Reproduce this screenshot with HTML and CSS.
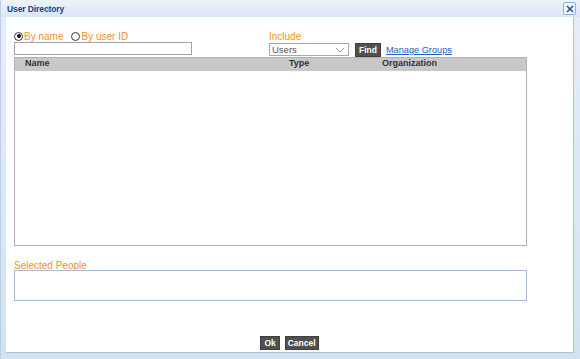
FILE: index.html
```html
<!DOCTYPE html>
<html lang="en">
<head>
    <meta charset="UTF-8">
    <meta name="viewport" content="width=device-width, initial-scale=1.0">
    <title>User Directory</title>
    <link rel="stylesheet" href="styles.css">
</head>
<body>
    <div class="dialog">
        <div class="titlebar">
            <span class="title">User Directory</span>
            <span class="close-btn">
                <svg width="8" height="8" viewBox="0 0 8 8"><path d="M1 1L7 7M7 1L1 7" stroke="#2a4c96" stroke-width="1.6"/></svg>
            </span>
        </div>

        <div class="content">
            <div class="search">
                <div class="search-left">
                    <div class="options">
                        <label class="option"><span class="radio checked"></span>By name</label>
                        <label class="option"><span class="radio"></span>By user ID</label>
                    </div>
                    <input type="text" class="search-input">
                </div>
                <div class="search-right">
                    <div class="label">Include</div>
                    <div class="controls">
                        <div class="select">
                            <span>Users</span>
                            <svg width="10" height="6" viewBox="0 0 10 6"><path d="M1 1L5 5L9 1" fill="none" stroke="#9a9a9a" stroke-width="1"/></svg>
                        </div>
                        <button class="dark-btn find-btn">Find</button>
                        <a href="#" class="link">Manage Groups</a>
                    </div>
                </div>
            </div>

            <table class="results">
                <thead>
                    <tr>
                        <th class="col-name">Name</th>
                        <th class="col-type">Type</th>
                        <th>Organization</th>
                    </tr>
                </thead>
                <tbody>
                    <!-- search results go here -->
                    <tr><td colspan="3"></td></tr>
                </tbody>
            </table>

            <div class="label selected-label">Selected People</div>
            <div class="selected-box"></div>

            <div class="footer">
                <button class="dark-btn ok-btn">Ok</button>
                <button class="dark-btn cancel-btn">Cancel</button>
            </div>
        </div>
    </div>
</body>
</html>
```

FILE: styles.css
```css
body {
    margin: 0;
    font-family: "Liberation Sans", Arial, sans-serif;
    font-size: 10px;
    background-color: #d8e5f4;
}
.dialog {
    height: 359px;
    box-sizing: border-box;
    display: flex;
    flex-direction: column;
    background: linear-gradient(#e6eef8, #d3e2f2);
    border-left: 1px solid #b9cfe6;
}
.titlebar {
    height: 17px;
    display: flex;
    align-items: center;
    justify-content: space-between;
    padding: 0 4px 0 6px;
    background: linear-gradient(#edf3fa, #d9e6f4);
}
.title {
    font-size: 8.5px;
    font-weight: bold;
    color: #1d3e8e;
    letter-spacing: -0.1px;
}
.close-btn {
    width: 11px;
    height: 11px;
    border: 1px solid #8fb0d8;
    border-radius: 2px;
    background-color: #f1f6fc;
    display: flex;
    align-items: center;
    justify-content: center;
}
.content {
    flex: 1;
    display: flex;
    flex-direction: column;
    margin: 0 6px 6px 5px;
    padding: 13px 0 0 8px;
    background-color: #fff;
    border-right: 1px solid #a9c4e3;
    border-bottom: 1px solid #a9c4e3;
}
.search {
    display: flex;
    align-items: flex-start;
}
.search-left {
    width: 255px;
}
.options {
    display: flex;
    height: 12px;
    gap: 8px;
}
.option {
    display: flex;
    align-items: center;
    color: #f5901f;
}
.radio {
    width: 7px;
    height: 7px;
    border: 1px solid #3a3a3a;
    border-radius: 50%;
    margin-right: 1px;
    background-color: #fff;
    position: relative;
}
.radio.checked::after {
    content: "";
    position: absolute;
    left: 1.5px;
    top: 1.5px;
    width: 4px;
    height: 4px;
    border-radius: 50%;
    background-color: #111;
}
.search-input {
    display: block;
    width: 178px;
    height: 13px;
    box-sizing: border-box;
    margin: 0;
    border: 1px solid #a3a3a3;
    padding: 0 2px;
}
.label {
    color: #f5901f;
    height: 13px;
    line-height: 13px;
}
.controls {
    display: flex;
    align-items: flex-start;
    height: 14px;
}
.select {
    width: 80px;
    height: 13px;
    box-sizing: border-box;
    border: 1px solid #a9a9a9;
    display: flex;
    align-items: center;
    justify-content: space-between;
    padding: 0 3px 0 2px;
    color: #555;
    font-size: 9.5px;
}
.dark-btn {
    font-family: "Liberation Sans", Arial, sans-serif;
    font-size: 8.5px;
    font-weight: bold;
    color: #fff;
    background-color: #505050;
    border: 1px solid #3f3f3f;
    height: 14px;
    line-height: 12px;
    padding: 0 3px;
    margin: 0;
}
.find-btn {
    margin-left: 6px;
}
.ok-btn {
    min-width: 19px;
}
.cancel-btn {
    padding: 0 2px;
}
.link {
    margin-left: 5px;
    line-height: 14px;
    color: #1a5fc6;
    font-size: 9.2px;
}
.results {
    margin-top: 0;
    width: 513px;
    height: 189px;
    border: 1px solid #b0b0b0;
    border-collapse: collapse;
}
.results th {
    height: 13px;
    padding: 0 0 0 10px;
    background-color: #c8c8c8;
    color: #333;
    font-size: 9px;
    text-align: left;
    vertical-align: top;
    line-height: 11px;
}
.col-name {
    width: 254px;
}
.col-type {
    width: 83px;
}
.results td {
    padding: 0;
}
.selected-label {
    margin-top: 13px;
    height: 11px;
}
.selected-box {
    width: 513px;
    height: 31px;
    box-sizing: border-box;
    border: 1px solid #a6bad1;
}
.footer {
    margin-top: auto;
    margin-left: -8px;
    padding-bottom: 2px;
    display: flex;
    justify-content: center;
    gap: 5px;
}
```
